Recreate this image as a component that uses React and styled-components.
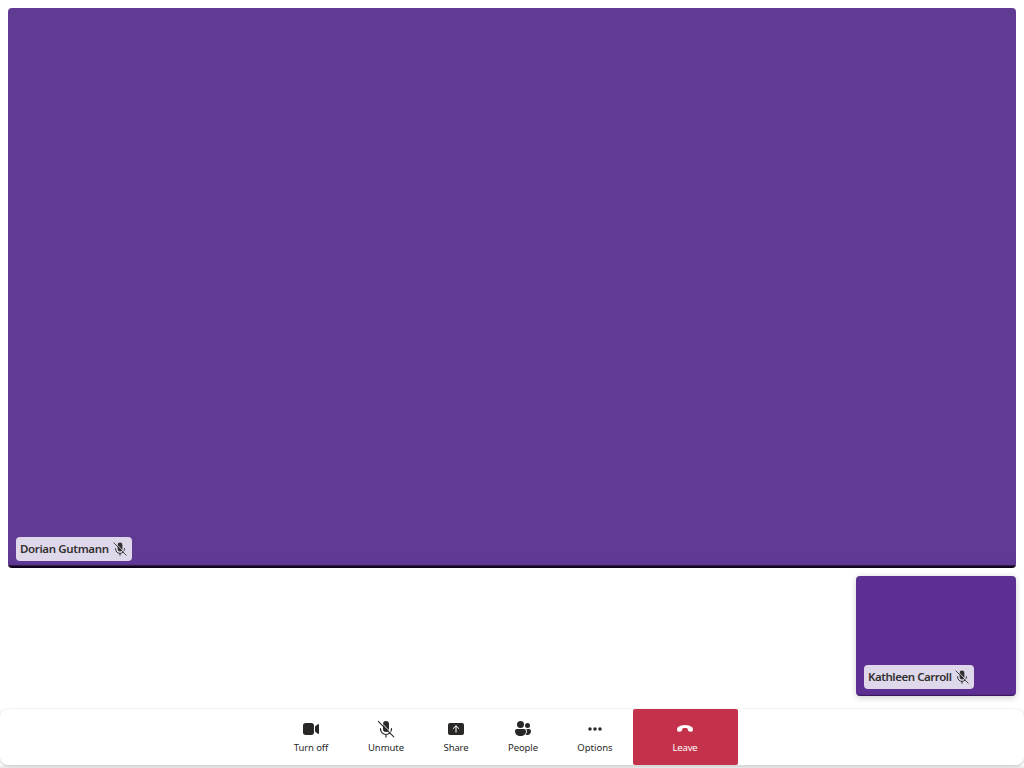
import React from 'react';
import styled, { createGlobalStyle } from 'styled-components';

const GlobalStyle = createGlobalStyle`
  * { box-sizing: border-box; }
  body { margin: 0; background: #fff; overflow: hidden; font-family: "Noto Sans", "Open Sans", sans-serif; color: #323130; }
`;

const CallScreen = styled.main`
  width: 100%;
  height: 768px;
  display: flex;
  flex-direction: column;
  padding-bottom: 3px;
  background: linear-gradient(#fff 766px, #ececec 766px);
`;

const Gallery = styled.section`
  flex: 1;
  display: flex;
  flex-direction: column;
  gap: 8px;
  padding: 8px 8px 13px;
`;

const VideoTile = styled.div`
  display: flex;
  align-items: flex-end;
  border-radius: 4px;
  padding: 0 8px 7px;
  ${(p) => p.$local ? `
    align-self: flex-end;
    width: 160px;
    height: 120px;
    background: linear-gradient(#5e2f92 118px, #4f2380 119px, #281044 120px);
    box-shadow: 0 1.6px 6px rgba(0,0,0,.18);
  ` : `
    height: 560px;
    background: linear-gradient(#613a94 0, #613a94 550px, #5f3696 555px, #60399a 556px, #513570 557px, #180629 558px, #0c0018 560px);
  `}
`;

const NameTag = styled.div`
  display: flex;
  align-items: center;
  gap: 3px;
  width: ${(p) => p.$width}px;
  height: 24px;
  padding-left: 4px;
  border-radius: 4px;
  background: #dfd7ea;
`;

const Name = styled.span`
  width: ${(p) => p.$width}px;
  font: 600 11.5px/16px "Noto Sans", sans-serif;
  letter-spacing: ${(p) => p.$spacing}px;
  white-space: nowrap;
`;

const ControlBar = styled.nav`
  height: 56px;
  display: flex;
  padding-left: 274px;
  background: #fff;
  border-radius: 8px;
  box-shadow: 0 1px 3px rgba(0,0,0,.22), 0 0 2px rgba(0,0,0,.06);
`;

const ControlButton = styled.button`
  width: ${(p) => p.$width}px;
  height: 56px;
  display: flex;
  flex-direction: column;
  align-items: center;
  gap: 2px;
  margin: ${(p) => (p.$danger ? '0 0 0 1px' : '0')};
  padding: ${(p) => (p.$danger ? '10px 1px 0 0' : '10px 0 0')};
  border: 0;
  border-radius: 2px;
  background: ${(p) => (p.$danger ? '#c4314b' : 'transparent')};
  color: ${(p) => (p.$danger ? '#fff' : '#292827')};
`;

const Caption = styled.span`
  font: 400 9.5px/14px "Noto Sans", sans-serif;
  letter-spacing: ${(p) => p.$spacing}px;
`;

const Icon = styled.svg`
  display: block;
  flex: none;
  width: ${(p) => p.$size || 20}px;
  height: ${(p) => p.$size || 20}px;
  fill: currentColor;
`;

const MicOff = ({ size, backdrop }) => (
  <Icon $size={size} viewBox="0 0 20 20">
    <rect x="7" y="2" width="6" height="11" rx="3" />
    <path d="M4.5 9.5v.5a5.5 5.5 0 0 0 11 0v-.5M10 15.5V18" fill="none" stroke="currentColor" strokeWidth="1.2" strokeLinecap="round" />
    <path d="m3.4 1.9 15 15" fill="none" stroke={backdrop} strokeWidth="1" />
    <path d="m2.3 2.3 15.5 15.5" fill="none" stroke="currentColor" strokeWidth="1.1" strokeLinecap="round" />
  </Icon>
);

const Video = () => (
  <Icon viewBox="0 0 20 20">
    <path d="M4.7 4h5.6A2.7 2.7 0 0 1 13 6.7v6.6a2.7 2.7 0 0 1-2.7 2.7H4.7A2.7 2.7 0 0 1 2 13.3V6.7A2.7 2.7 0 0 1 4.7 4ZM14 7.5l2.8-2.3a.75.75 0 0 1 1.2.6v8.4a.75.75 0 0 1-1.2.6L14 12.5Z" />
  </Icon>
);

const Share = () => (
  <Icon viewBox="0 0 20 20">
    <rect x="2" y="4" width="16" height="12" rx="2" />
    <path d="M10 13.2V7M7.2 9.5 10 6.8l2.8 2.7" fill="none" stroke="#fff" strokeLinecap="round" strokeLinejoin="round" />
  </Icon>
);

const People = () => (
  <Icon viewBox="0 0 20 20">
    <circle cx="7.5" cy="5.5" r="3.5" />
    <circle cx="14.5" cy="6.5" r="2.5" />
    <path d="M4 10h7a2 2 0 0 1 2 2c0 3.2-2.2 5-5.5 5S2 15.2 2 12a2 2 0 0 1 2-2Z" />
    <path d="M13.2 10H16a2 2 0 0 1 2 2c0 2.6-1.5 4-3.8 4-.7 0-1.2-.1-1.7-.3A6 6 0 0 0 14 12c0-.8-.3-1.5-.8-2Z" />
  </Icon>
);

const More = () => (
  <Icon viewBox="0 0 20 20">
    <circle cx="5" cy="10" r="1.75" /><circle cx="10" cy="10" r="1.75" /><circle cx="15" cy="10" r="1.75" />
  </Icon>
);

const EndCall = () => (
  <Icon viewBox="0 0 20 20">
    <path d="m17.95 10.77-.15.82c-.13.77-.93 1.24-1.77 1.15l-1.67-.3c-.72-.12-1.3-.66-1.48-1.34L12.5 9.5c-.8-.33-1.6-.4-2.5-.4s-1.8.1-2.5.4l-.38 1.6c-.18.68-.76 1.22-1.48 1.34l-1.67.3c-.84.09-1.64-.38-1.77-1.15l-.15-.82c-.16-1.05.2-2 1.13-2.7C4.8 6.7 7.2 6 10 6s5.2.7 6.8 2.07c.94.7 1.3 1.65 1.15 2.7Z" />
  </Icon>
);

const controls = [
  { label: 'Turn off', icon: <Video />, width: 74, spacing: -0.12 },
  { label: 'Unmute', icon: <MicOff size={20} backdrop="#fff" />, width: 76, spacing: -0.05 },
  { label: 'Share', icon: <Share />, width: 64, spacing: -0.15 },
  { label: 'People', icon: <People />, width: 70, spacing: -0.1 },
  { label: 'Options', icon: <More />, width: 74, spacing: 0 },
  { label: 'Leave', icon: <EndCall />, width: 105, danger: true, spacing: -0.15 },
];

export default function App() {
  return (
    <CallScreen>
      <GlobalStyle />
      <Gallery>
        <VideoTile>
          <NameTag $width={116}>
            <Name $width={89} $spacing={-0.35}>Dorian Gutmann</Name>
            <MicOff size={16} backdrop="#dfd7ea" />
          </NameTag>
        </VideoTile>
        <VideoTile $local>
          <NameTag $width={110}>
            <Name $width={83} $spacing={-0.45}>Kathleen Carroll</Name>
            <MicOff size={16} backdrop="#dfd7ea" />
          </NameTag>
        </VideoTile>
      </Gallery>
      <ControlBar>
        {controls.map((c) => (
          <ControlButton key={c.label} $width={c.width} $danger={c.danger}>
            {c.icon}<Caption $spacing={c.spacing}>{c.label}</Caption>
          </ControlButton>
        ))}
      </ControlBar>
    </CallScreen>
  );
}
